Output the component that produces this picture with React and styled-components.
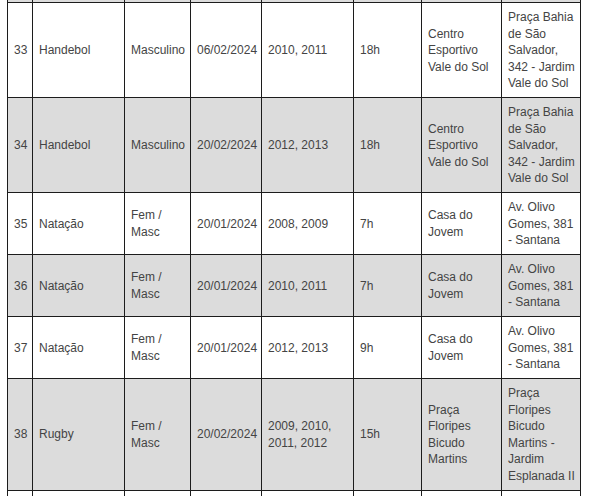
import React from "react";
import styled, { createGlobalStyle } from "styled-components";

const Global = createGlobalStyle`
  html, body { margin: 0; padding: 0; background: #ffffff; }
  body { overflow: hidden; }
`;

const Viewport = styled.div`
  width: 590px;
  height: 496px;
  overflow: hidden;
  padding-left: 7px;
  box-sizing: border-box;
`;

const Table = styled.table`
  width: 574px;
  table-layout: fixed;
  border-collapse: collapse;
  font-family: "Liberation Sans", Arial, sans-serif;
  font-size: 12px;
  line-height: 16.5px;
  color: #444444;
`;

const Row = styled.tr`
  background: ${(p) => (p.$shaded ? "#dcdcdc" : "#ffffff")};
`;

const Cell = styled.td`
  border: 1px solid #1c1c1c;
  padding: 6px 2px 5.5px 6px;
  vertical-align: middle;
  text-align: left;
`;

/* Edge rows that are scrolled mostly out of view: only their borders show */
const StubCell = styled.td`
  border-left: 1px solid #1c1c1c;
  border-right: 1px solid #1c1c1c;
  border-top: ${(p) => (p.$edge === "top" ? "none" : "1px solid #1c1c1c")};
  border-bottom: ${(p) => (p.$edge === "bottom" ? "none" : "1px solid #1c1c1c")};
  padding: 0;
  height: ${(p) => p.$h}px;
  line-height: 0;
`;

const widths = [25, 92, 66, 71, 92, 68, 80, 79];

const rows = [
  ["33", "Handebol", "Masculino", "06/02/2024", "2010, 2011", "18h", "Centro Esportivo Vale do Sol", "Praça Bahia de São Salvador, 342 - Jardim Vale do Sol"],
  ["34", "Handebol", "Masculino", "20/02/2024", "2012, 2013", "18h", "Centro Esportivo Vale do Sol", "Praça Bahia de São Salvador, 342 - Jardim Vale do Sol"],
  ["35", "Natação", "Fem / Masc", "20/01/2024", "2008, 2009", "7h", "Casa do Jovem", "Av. Olivo Gomes, 381 - Santana"],
  ["36", "Natação", "Fem / Masc", "20/01/2024", "2010, 2011", "7h", "Casa do Jovem", "Av. Olivo Gomes, 381 - Santana"],
  ["37", "Natação", "Fem / Masc", "20/01/2024", "2012, 2013", "9h", "Casa do Jovem", "Av. Olivo Gomes, 381 - Santana"],
  ["38", "Rugby", "Fem / Masc", "20/02/2024", "2009, 2010, 2011, 2012", "15h", "Praça Floripes Bicudo Martins", "Praça Floripes Bicudo Martins - Jardim Esplanada II"],
];

export default function App() {
  return (
    <>
      <Global />
      <Viewport>
        <Table>
          <colgroup>
            {widths.map((w, i) => (
              <col key={i} style={{ width: w }} />
            ))}
          </colgroup>
          <tbody>
            <Row $shaded>
              {widths.map((_, i) => (
                <StubCell key={i} $edge="top" $h={2} />
              ))}
            </Row>
            {rows.map((r) => (
              <Row key={r[0]} $shaded={Number(r[0]) % 2 === 0}>
                {r.map((c, i) => (
                  <Cell key={i}>{c}</Cell>
                ))}
              </Row>
            ))}
            <Row>
              {widths.map((_, i) => (
                <StubCell key={i} $edge="bottom" $h={20} />
              ))}
            </Row>
          </tbody>
        </Table>
      </Viewport>
    </>
  );
}
